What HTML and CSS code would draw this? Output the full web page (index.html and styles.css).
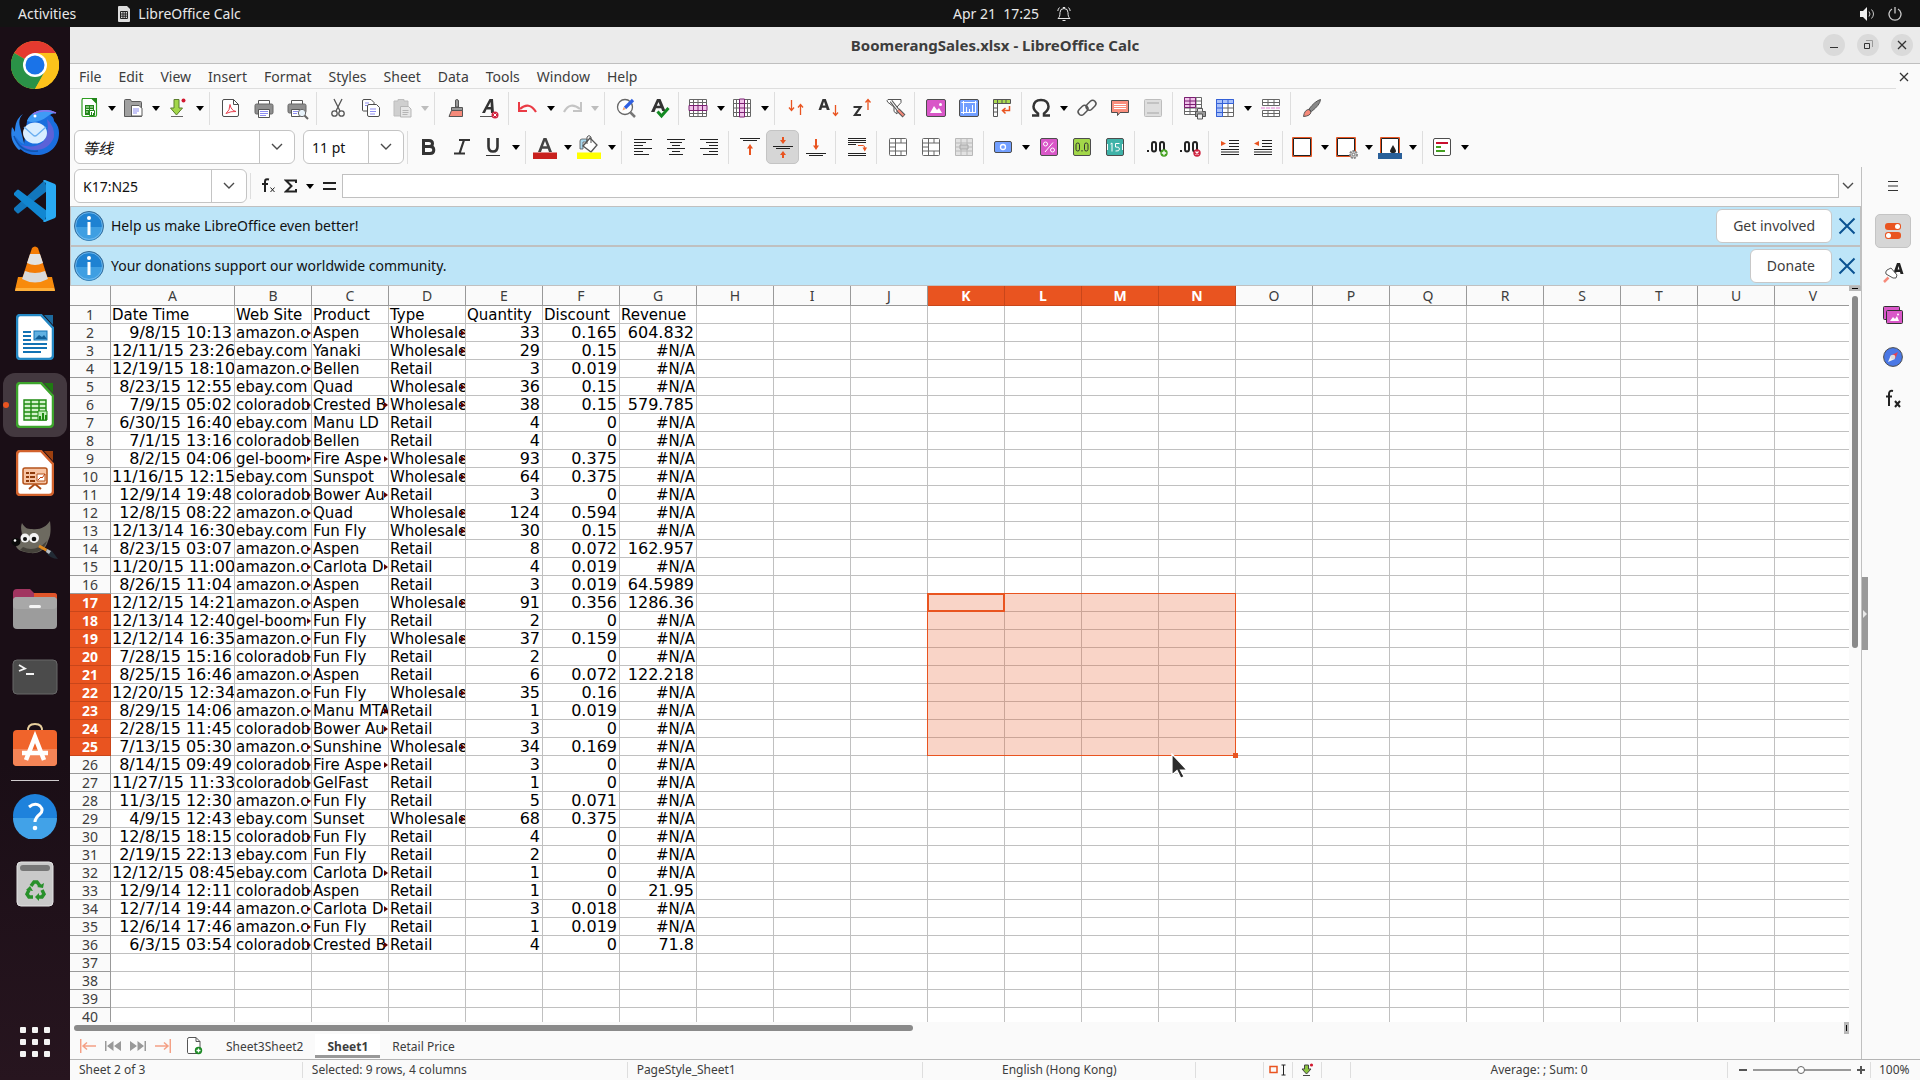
FILE: index.html
```html
<!DOCTYPE html>
<html lang="en">
  <head>
    <meta charset="UTF-8" />
    <meta name="viewport" content="width=device-width, initial-scale=1.0" />
    <title>BoomerangSales.xlsx - LibreOffice Calc</title>
    <link rel="stylesheet" href="styles.css">
  </head>
  <body>
    <svg class="defs" aria-hidden="true">
      <symbol id="caret" viewBox="0 0 8 5"><path d="M0 0h8L4 5z" fill="currentColor"/></symbol>
      <symbol id="chevron" viewBox="0 0 12 8"><path d="M1 1l5 5 5-5" fill="none" stroke="#4a4a4a" stroke-width="1.4"/></symbol>
      <symbol id="cross" viewBox="0 0 18 18"><path d="M1.5 1.5l15 15M16.5 1.5l-15 15" stroke="#0a5292" stroke-width="2"/></symbol>
      <symbol id="info" viewBox="0 0 30 30">
        <circle cx="15" cy="15" r="14.5" fill="#1e82d2" stroke="#3b6b92"/>
        <path d="M1.5 16h27a13.5 13.5 0 0 1-27 0z" fill="#3f9fe2"/>
        <circle cx="15" cy="15" r="13.4" fill="none" stroke="#7fc0ee" stroke-width=".8"/>
        <circle cx="15" cy="7" r="2" fill="#fff"/><path d="M15 11v13" stroke="#fff" stroke-width="3"/>
      </symbol>
      <symbol id="merge" viewBox="0 0 24 24">
        <rect x="3.5" y="3.5" width="17" height="17" rx="1" fill="#fff" stroke="#666"/>
        <path d="M9.5 3.500v17M3.500 8h17M3.500 12h6M3.500 16h17M15 3.500V8M15 16v4.500" stroke="#666" fill="none"/>
      </symbol>
    </svg>

    <header class="topbar">
      <div class="topbar-left">
        <a href="#">Activities</a>
        <a href="#" class="app-name">
          <svg width="12" height="16" viewBox="0 0 12 16"><path d="M1 0h8l3 3v12q0 1-1 1H1q-1 0-1-1V1q0-1 1-1z" fill="#ddd"/><path d="M2.500 5.500h7v7h-7zM2.500 8h7M2.500 10.200h7M5 5.500v7M7.300 5.500v7" fill="none" stroke="#222"/></svg>
          LibreOffice Calc
        </a>
      </div>
      <div class="topbar-clock">
        <time>Apr 21&nbsp; 17:25</time>
        <svg width="14" height="16" viewBox="0 0 14 16" fill="none" stroke="#e8e8e8"><path d="M1 12.500h12c-1.500-1.500-2-2.500-2-6a4 4 0 0 0-8 0c0 3.500-.5 4.500-2 6zM5.500 14.500h3M.8 5Q1 3 2.500 1.500M13.200 5Q13 3 11.500 1.500M5.800 1.500h2.400"/></svg>
      </div>
      <div class="topbar-right">
        <svg width="15" height="14" viewBox="0 0 15 14"><path d="M0 4h3l4-4v14l-4-4H0z" fill="#eee"/><path d="M9 4.500q2 2.500 0 5M11.500 2.500q4 4.500 0 9" fill="none" stroke="#ccc"/></svg>
        <svg width="14" height="14" viewBox="0 0 14 14" fill="none" stroke="#ccc" stroke-width="1.300"><path d="M4 2a6 6 0 1 0 6 0M7 0v6.500"/></svg>
      </div>
    </header>

    <div class="desktop">
      <nav class="dock" aria-label="Dock">
        <a href="#" aria-label="Chrome"><svg width="48" height="48" viewBox="0 0 48 48"><circle cx="24" cy="24" r="24" fill="#fcc21b"/><path d="M24 24L3.200 12A24 24 0 0 1 44.800 12z" fill="#e53a2f"/><path d="M3.200 12A24 24 0 0 0 24 48L34 30 24 24z" fill="#2a9247"/><path d="M24 12h20.800A24 24 0 0 1 24 48l11-19z" fill="#fcc21b"/><circle cx="24" cy="24" r="12" fill="#fff"/><circle cx="24" cy="24" r="9.500" fill="#1a73e8"/></svg></a>
        <a href="#" aria-label="Thunderbird"><svg width="48" height="48" viewBox="0 0 48 48"><path d="M12 5C7 10 8 15 10 22l4 16-6 3C1 35-1 27 1 18q2 2 3 5C4 15 6 9 12 5z" fill="#2a83ea"/><path d="M16 12C19 4 27 1 35 1q6 0 10 3-4 0-6 2 4 2 4 6 5 5 5 12C48 38 38 46 26 46 12 46 5 38 5 28q4 6 8 7z" fill="#1a6ede"/><path d="M16 12C19 4 27 1 35 1q6 0 10 3-5 0-8 3-7 6-17 6z" fill="#3f9bf5"/><path d="M22 5Q32-1 45 4" fill="none" stroke="#8c74ea" stroke-width="1.500"/><path d="M36 10q8 8 7 18-5 13-19 13-8 0-14-5 14 4 22-3 7-8 4-23z" fill="#5b62d8"/><ellipse cx="24" cy="24" rx="12" ry="10.500" fill="#d9edff"/><path d="M13 18l9 8q2 2 4 0l9-8" fill="none" stroke="#6aaef0" stroke-width="1.300"/><path d="M3 27q6 17 24 15" fill="none" stroke="#1253ad" stroke-width="1.500"/><circle cx="24" cy="7" r="1.500" fill="#fff"/></svg></a>
        <a href="#" aria-label="Visual Studio Code"><svg width="42" height="42" viewBox="0 0 42 42"><path d="M31 0l2 11L5 33q-1 1-2 0l-3-3q-1-1 0-2z" fill="#1277bd"/><path d="M0 13l3-3q1-1 2 0l28 21-2 11L0 15q-1-1 0-2z" fill="#1187d2"/><path d="M31 0l10 4q1 1 1 2v30q0 1-1 2l-10 4q-2 0-2-1l3-2V3l-3-2q0-1 2-1z" fill="#29aaf4"/></svg></a>
        <a href="#" aria-label="VLC"><svg width="42" height="46" viewBox="0 0 42 46"><path d="M4 31h34l3 13q0 1-1 1H2q-1 0-1-1z" fill="#f88b0c"/><path d="M2 42h38l1 3H1z" fill="#ffb13c"/><path d="M18 2q3-3 6 0l10 31q-13 7-26 0z" fill="#f47c06"/><path d="M16 8h10l3 9q-8 4-16 0z" fill="#e2e2e2"/><path d="M11 25q10 4 20 0l3 8q-13 7-26 0z" fill="#dadada"/></svg></a>
        <a href="#" aria-label="LibreOffice Writer"><svg width="38" height="46" viewBox="0 0 38 46"><path d="M4 1h21l12 13v27q0 4-4 4H4q-3 0-3-4V5q0-4 3-4z" fill="#fff" stroke="#2488c4" stroke-width="2.500"/><path d="M28 1h9v10z" fill="#1d6a9e"/><path d="M7 18h8M7 22h8M7 26h8M7 30h24M7 34h24M7 38h18" stroke="#1272b4" stroke-width="2"/><rect x="18" y="17" width="13" height="9" fill="#5fb0e2" stroke="#1272b4"/><path d="M19 25l4-4 3 2 2-2 3 4z" fill="#125e96"/></svg></a>
        <a href="#" class="active" aria-label="LibreOffice Calc"><svg width="38" height="46" viewBox="0 0 38 46"><path d="M4 1h21l12 13v27q0 4-4 4H4q-3 0-3-4V5q0-4 3-4z" fill="#fff" stroke="#3da52c" stroke-width="2.500"/><path d="M28 1h9v10z" fill="#1f7a12"/><path d="M8 18h22v20H8zM8 22h22M8 26h22M8 30h22M8 34h22M15 18v20M23 18v20" fill="#d2f2ca" stroke="#1f8a12" stroke-width="1.400"/><path d="M22 29h9v9h-9z" fill="#c2eebb" stroke="#1f8a12"/><path d="M24 38v-4M27 38v-7M30 38v-5" stroke="#1f8a12" stroke-width="2"/></svg></a>
        <a href="#" aria-label="LibreOffice Impress"><svg width="38" height="46" viewBox="0 0 38 46"><path d="M4 1h21l12 13v27q0 4-4 4H4q-3 0-3-4V5q0-4 3-4z" fill="#fff" stroke="#d2622c" stroke-width="2.500"/><path d="M28 1h9v10z" fill="#9d400f"/><path d="M13 39l6-5 6 5" fill="none" stroke="#a94814" stroke-width="2"/><rect x="7" y="18" width="24" height="16" rx="2" fill="#f7c5a5" stroke="#b5531b" stroke-width="1.500"/><path d="M10 23h3M10 27h3M10 31h3M14 23h5M14 27h5M14 31h5" stroke="#8f3a0a" stroke-width="2"/><path d="M21 24h8v7h-8z" fill="#fff" stroke="#b5531b"/><path d="M22 30l3-3 1 1 3-4" fill="none" stroke="#c03c0a"/></svg></a>
        <a href="#" aria-label="GIMP"><svg width="48" height="40" viewBox="0 0 48 40"><path d="M11 2c3 5 5 6 10 6 8 1 14-2 18-8 1 8 1 14-2 20-2 9-10 13-18 12-7-1-15-3-14-9 2-3 6-2 6-8 0-5-2-8 0-13z" fill="#6d6a60"/><path d="M12 26q12 6 24-6-4 12-16 12-7-1-11-3z" fill="#45423b"/><ellipse cx="5" cy="21" rx="4.500" ry="4" fill="#0b0b0b"/><circle cx="4" cy="19.500" r="1.300" fill="#fff"/><circle cx="14" cy="17" r="4.500" fill="#f3f3f3"/><circle cx="23" cy="17" r="5" fill="#f3f3f3"/><circle cx="14" cy="18" r="2" fill="#111"/><circle cx="23" cy="18" r="2.300" fill="#111"/><path d="M28 25l9 5" stroke="#e08a1e" stroke-width="3"/><path d="M36 28l5 2 6 8q-8 0-12-7z" fill="#222b35"/><path d="M36 28l4 2-2 3-3-2z" fill="#b9bec4"/></svg></a>
        <a href="#" aria-label="Files"><svg width="46" height="42" viewBox="0 0 46 42"><path d="M1 8V5q0-4 4-4h13l4 4h20q3 0 3 3v8H1z" fill="#a13560"/><path d="M22 5h20q3 0 3 3v8H22z" fill="#e0552a"/><rect x="1" y="9" width="44" height="32" rx="4" fill="#9c9c9c"/><rect x="1" y="9" width="44" height="12" rx="4" fill="#a8a8a8"/><rect x="17" y="17" width="12" height="3" rx="1.500" fill="#f4f4f4"/></svg></a>
        <a href="#" aria-label="Terminal"><svg width="46" height="36" viewBox="0 0 46 36"><rect x="1" y="1" width="44" height="34" rx="4" fill="#4b4b4b" stroke="#686868"/><path d="M7 6l6 3.500L7 12M14 15h8" fill="none" stroke="#f4f4f4" stroke-width="1.800"/></svg></a>
        <a href="#" aria-label="Software"><svg width="46" height="44" viewBox="0 0 46 44"><path d="M16 9q-1-8 7-8t7 8" fill="none" stroke="#e8cf9d" stroke-width="2"/><rect x="1" y="7" width="44" height="36" rx="4" fill="#f0642b"/><path d="M1 26h44v13q0 4-4 4H5q-4 0-4-4z" fill="#f48456"/><path d="M14 37L23 14l9 23M10 30h26" fill="none" stroke="#fff" stroke-width="4.500"/></svg></a>
        <hr />
        <a href="#" aria-label="Help"><svg width="46" height="46" viewBox="0 0 46 46"><circle cx="23" cy="23" r="22" fill="#1e82dc"/><path d="M1 25a22 22 0 0 0 44 0z" fill="#41a2e8"/><path d="M17 14q6-5 11-1 4 4 0 8-5 4-5 8" fill="none" stroke="#fff" stroke-width="3"/><circle cx="23" cy="35" r="2.300" fill="#fff"/></svg></a>
        <a href="#" aria-label="Trash"><svg width="38" height="46" viewBox="0 0 38 46"><rect x="1" y="1" width="36" height="44" rx="4" fill="#c9c9c9" stroke="#e4e4e4"/><rect x="4" y="4" width="30" height="6" rx="3" fill="#777"/><path d="M15 25l3-4h3l3 4M13 29l-2 4 2 3h4M26 29l2 4-2 3h-4" fill="none" stroke="#27902a" stroke-width="3.500"/><path d="M23 32v8l-4-4zM21 26l6 1 1-5zM10 29l7 1-3-5z" fill="#27902a"/></svg></a>
        <a href="#" class="apps" aria-label="Show Applications"><svg width="30" height="30" viewBox="0 0 30 30"><g fill="#f4f4f4"><rect width="6" height="6" rx="1"/><rect x="12" width="6" height="6" rx="1"/><rect x="24" width="6" height="6" rx="1"/><rect y="12" width="6" height="6" rx="1"/><rect x="12" y="12" width="6" height="6" rx="1"/><rect x="24" y="12" width="6" height="6" rx="1"/><rect y="24" width="6" height="6" rx="1"/><rect x="12" y="24" width="6" height="6" rx="1"/><rect x="24" y="24" width="6" height="6" rx="1"/></g></svg></a>
      </nav>

      <div class="window">
        <div class="titlebar">
          <h1>BoomerangSales.xlsx - LibreOffice Calc</h1>
          <div class="window-buttons">
            <button aria-label="Minimize"><svg width="10" height="10"><path d="M1 7.500h8" stroke="#333"/></svg></button>
            <button aria-label="Restore"><svg width="10" height="10" fill="none"><path d="M1.500 3.500h5v5h-5z" stroke="#333"/><path d="M3 .5h6.500V7" stroke="#999"/></svg></button>
            <button aria-label="Close"><svg width="10" height="10"><path d="M1 1l8 8M9 1L1 9" stroke="#333" stroke-width="1.300"/></svg></button>
          </div>
        </div>

        <nav class="menubar">
          <div class="menus">
            <a href="#">File</a><a href="#">Edit</a><a href="#">View</a><a href="#">Insert</a><a href="#">Format</a><a href="#">Styles</a><a href="#">Sheet</a><a href="#">Data</a><a href="#">Tools</a><a href="#">Window</a><a href="#">Help</a>
          </div>
          <button class="doc-close" aria-label="Close document"><svg width="10" height="10"><path d="M1 1l8 8M9 1L1 9" stroke="#333" stroke-width="1.300"/></svg></button>
        </nav>

        <!-- Standard toolbar -->
        <div class="toolbar">
          <button class="split" aria-label="New"><svg viewBox="0 0 24 24"><path d="M5.500 2.500H15l4.500 4.500v12q0 1.500-1.500 1.500H6.500q-1.500 0-1.500-1.500V4z" fill="#fff" stroke="#2f9e22" stroke-width="1.200"/><path d="M14 2h6v6z" fill="#22851a"/><path d="M8 9h9v10H8z" fill="#22851a"/><path d="M9 11h3M13 11h3M9 13.500h3M9 16h2M13 13.500h3" stroke="#d6f5d0"/><path d="M12.500 14.500h5v5h-5z" fill="#fff" stroke="#22851a"/><path d="M14.500 19v-3M16.500 19v-2" stroke="#22851a"/></svg><svg class="caret"><use href="#caret"/></svg></button>
          <button class="split" aria-label="Open"><svg viewBox="0 0 24 24"><path d="M3.500 20.500v-16q0-1 1-1h5l1 2h9q1 0 1 1v14z" fill="#a0a0a0" stroke="#5a5a5a"/><path d="M10.500 9.500H18l3 3v7.500h-10.500z" fill="#fff" stroke="#5a5a5a"/><path d="M12 13h6M12 15h6M12 17h4" stroke="#8d8df0"/></svg><svg class="caret"><use href="#caret"/></svg></button>
          <button class="split" aria-label="Save"><svg viewBox="0 0 24 24"><path d="M9 3.500h5V12h3.500l-6 7-6-7H9z" fill="#a2d749" stroke="#5b7c2c"/><path d="M6 20.500h12" stroke="#666"/><circle cx="18.500" cy="4.500" r="2" fill="#d2172f"/></svg><svg class="caret"><use href="#caret"/></svg></button>
          <span class="sep"></span>
          <button aria-label="Export as PDF"><svg viewBox="0 0 24 24"><path d="M5 3.500h9.500l5 5V19q0 1.500-1.500 1.500H5q-1.500 0-1.500-1.500V5q0-1.500 1.500-1.500z" fill="#fff" stroke="#4d4d4d"/><path d="M14.500 3.500v5h5" fill="none" stroke="#4d4d4d"/><path d="M7 17.500q4-3 4-9 1 6 6 7-5-.5-10 2z" fill="none" stroke="#e8414f"/></svg></button>
          <button aria-label="Print"><svg viewBox="0 0 24 24"><path d="M6.500 8V4.500h11V8" fill="#fff" stroke="#555"/><rect x="3" y="8" width="18" height="10" rx="1.500" fill="#8f8f8f" stroke="#666"/><path d="M6.500 13.500h11v8h-11z" fill="#fff" stroke="#555"/><path d="M8 15.500h8M8 17.500h8M8 19.500h6" stroke="#8d8df0"/></svg></button>
          <button aria-label="Print preview"><svg viewBox="0 0 24 24"><path d="M6.500 8V4.500h11V8" fill="#fff" stroke="#555"/><rect x="3" y="8" width="18" height="9" rx="1.500" fill="#8f8f8f" stroke="#666"/><path d="M6.500 13.500h11v7h-11z" fill="#fff" stroke="#555"/><path d="M8 15.500h5M8 17.500h4" stroke="#8d8df0"/><circle cx="17" cy="17" r="3.700" fill="#e8f3fb" stroke="#666"/><path d="M19.500 19.500L23 23" stroke="#666" stroke-width="2"/></svg></button>
          <span class="sep"></span>
          <button aria-label="Cut"><svg viewBox="0 0 24 24" fill="none" stroke="#555" stroke-width="1.300"><path d="M8 3l6 12M16 3l-6 12"/><circle cx="8.500" cy="17.500" r="2.700"/><circle cx="15.500" cy="17.500" r="2.700"/></svg></button>
          <button aria-label="Copy"><svg viewBox="0 0 24 24"><path d="M5 3.500h7l3 3V15H4.500q-1 0-1-1V5q0-1.500 1.500-1.500z" fill="#fff" stroke="#4d4d4d"/><path d="M10 8.500h7.500l3 3V19q0 1.500-1.500 1.500h-9q-1.500 0-1.500-1.500v-9q0-1.500 1.500-1.500z" fill="#fff" stroke="#4d4d4d"/><path d="M6 7h4M6 9.500h2M11 13h6M11 15.500h6M11 18h5" stroke="#8d8df0"/></svg></button>
          <button class="split off" aria-label="Paste" disabled><svg viewBox="0 0 24 24"><path d="M4 5h4V3.500h6V5h4v15H4z" fill="#cfcfcf" stroke="#bdbdbd"/><path d="M10.500 10.500h8l2.500 2.500v8H10.500z" fill="#e6e6e6" stroke="#b5b5b5"/><path d="M12.500 14.500h6M12.500 16.500h6M12.500 18.500h5" stroke="#b5b5b5"/></svg><svg class="caret"><use href="#caret"/></svg></button>
          <span class="sep"></span>
          <button aria-label="Clone formatting"><svg viewBox="0 0 24 24"><path d="M12.500 3.500q2 0 2 1.500v6h-3V5q0-1.500 1-1.500z" fill="#999" stroke="#555"/><path d="M7.500 11.500h11v3h-11z" fill="#999" stroke="#555"/><path d="M7.500 14.500h11v6H5z" fill="#f68a7a" stroke="#555"/></svg></button>
          <button aria-label="Clear formatting"><svg viewBox="0 0 24 24"><path d="M5 17L12.500 3H16l1 14h-3l-.2-3.500H9.500L8 17zM11 11h2.800l-.2-5z" fill="#333"/><path d="M3 20.500h12" stroke="#555"/><circle cx="18" cy="19" r="3.500" fill="#d2243f"/><path d="M16.500 17.500l3 3M19.500 17.500l-3 3" stroke="#fff"/></svg></button>
          <span class="sep"></span>
          <button class="split" aria-label="Undo"><svg viewBox="0 0 24 24"><path d="M4 13q9-8 16 3" fill="none" stroke="#ea3b45" stroke-width="2.200"/><path d="M3 6v9h8" fill="none" stroke="#ea3b45" stroke-width="2"/></svg><svg class="caret"><use href="#caret"/></svg></button>
          <button class="split off" aria-label="Redo" disabled><svg viewBox="0 0 24 24"><path d="M4 16q6-11 16-3" fill="none" stroke="#c4c4c4" stroke-width="2.200"/><path d="M21 6v9h-8" fill="none" stroke="#c4c4c4" stroke-width="2"/></svg><svg class="caret"><use href="#caret"/></svg></button>
          <span class="sep"></span>
          <button aria-label="Find and replace"><svg viewBox="0 0 24 24"><circle cx="11" cy="11" r="7.500" fill="#fff" stroke="#666" stroke-width="1.300"/><path d="M16.500 16.500L21 21" stroke="#777" stroke-width="2.500"/><path d="M11 12l8-8" stroke="#2f5fe0" stroke-width="3.200"/><path d="M8.500 14.500l1-3.500 2.500 2z" fill="#f0a878"/></svg></button>
          <button aria-label="Spelling"><svg viewBox="0 0 24 24"><path d="M4 16L10 3h3.500l5 12h-3.300l-1-2.800H9L7.500 16zM9.800 9.800H13L11.500 6z" fill="#333"/><path d="M10.500 15.500l4 4.500 7-8" fill="none" stroke="#138a22" stroke-width="3"/></svg></button>
          <span class="sep"></span>
          <button class="split" aria-label="Row"><svg viewBox="0 0 24 24"><path d="M3.500 3.500h17v17h-17z" fill="#fff" stroke="#666"/><path d="M3.500 6.500h17M3.500 17.500h17M7.500 3.500v17M12 3.500v17M16.500 3.500v17" stroke="#666"/><path d="M3 9.500h18v5H3z" fill="#f0c3ea" stroke="#7b1f72"/><path d="M7.500 9v6M12 9v6M16.500 9v6" stroke="#7b1f72"/></svg><svg class="caret"><use href="#caret"/></svg></button>
          <button class="split" aria-label="Column"><svg viewBox="0 0 24 24"><path d="M3.500 3.500h17v17h-17z" fill="#fff" stroke="#666"/><path d="M3.500 7.500h17M3.500 12h17M3.500 16.500h17M6.500 3.500v17M17.500 3.500v17" stroke="#666"/><path d="M9.500 3v18h5V3z" fill="#f0c3ea" stroke="#7b1f72"/><path d="M9 7.500h6M9 12h6M9 16.500h6" stroke="#7b1f72"/></svg><svg class="caret"><use href="#caret"/></svg></button>
          <span class="sep"></span>
          <button aria-label="Sort"><svg viewBox="0 0 24 24" fill="none" stroke="#e95420" stroke-width="1.300"><path d="M7.500 4v10M5 11.500l2.500 3 2.500-3M16.500 9v10M14 11.500l2.500-3 2.500 3"/></svg></button>
          <button aria-label="Sort ascending"><svg viewBox="0 0 24 24"><path d="M1.500 14L5.500 3h3.300l4 11h-3l-.7-2.300H5L4.300 14zM5.700 9.500h2.700L7 5.500z" fill="#333"/><path d="M18.500 9v10M16 16.500l2.500 3 2.500-3" fill="none" stroke="#e95420" stroke-width="1.300"/></svg></button>
          <button aria-label="Sort descending"><svg viewBox="0 0 24 24"><path d="M3.500 11h7l-5.500 8h6" fill="none" stroke="#333" stroke-width="2.200"/><path d="M18 4v10M15.500 6.500l2.500-3 2.500 3" fill="none" stroke="#e95420" stroke-width="1.300"/></svg></button>
          <button aria-label="AutoFilter"><svg viewBox="0 0 24 24"><path d="M5 3.500h13v3L14 11v7l-3-2.500V11L4.500 6q-1-2 .5-2.500z" fill="#fff" stroke="#555"/><path d="M8 5l7 9" stroke="#555" stroke-width="3"/><path d="M8 5l7 9" stroke="#fff" stroke-width="1.200"/><path d="M15 14l6 6" stroke="#555" stroke-width="4"/><path d="M15 14l5.500 5.500" stroke="#f68a7a" stroke-width="2"/></svg></button>
          <span class="sep"></span>
          <button aria-label="Insert image"><svg viewBox="0 0 24 24"><rect x="2.500" y="3.500" width="19" height="17" rx="1.500" fill="#d957c8" stroke="#4d4d4d"/><path d="M6 17l4-7 3 4 2-2 3 5z" fill="#fff"/><circle cx="16.500" cy="8.500" r="1.500" fill="#fff"/></svg></button>
          <button aria-label="Insert chart"><svg viewBox="0 0 24 24"><rect x="2.500" y="3.500" width="19" height="17" rx="1.500" fill="#729fff" stroke="#4d4d4d"/><path d="M4.500 6.500h15M6.500 5v13M4 16.500h15M18.500 5v11M9.500 16v-5M12.500 16v-3M15.500 16V9" stroke="#fff" fill="none"/></svg></button>
          <button aria-label="Pivot table"><svg viewBox="0 0 24 24"><path d="M3.500 3.500h17v4h-17z" fill="#a9d94f" stroke="#555"/><path d="M3.500 7.500h4v13h-4zM3.500 12h4M3.500 16h4M7.500 3.500v4M12 3.500v4M16 3.500v4" fill="none" stroke="#555"/><path d="M19.500 10v4.500H13M15.500 12l-3 2.500 3 3" fill="none" stroke="#e95420" stroke-width="1.500"/></svg></button>
          <span class="sep"></span>
          <button class="split" aria-label="Special character"><svg viewBox="0 0 24 24"><path d="M3 19.500h6v-2Q4.500 14 4.500 10.500 5 4 12 4t7.500 6.500q0 3.500-4.500 7v2h6" fill="none" stroke="#333" stroke-width="2.500"/></svg><svg class="caret"><use href="#caret"/></svg></button>
          <button aria-label="Hyperlink"><svg viewBox="0 0 24 24" fill="none" stroke="#555" stroke-width="1.500"><rect x="2.500" y="11" width="11" height="6.500" rx="3.200" transform="rotate(-45 8 14.200)"/><rect x="10.500" y="6" width="11" height="6.500" rx="3.200" transform="rotate(-45 16 9.200)"/></svg></button>
          <button aria-label="Comment"><svg viewBox="0 0 24 24"><path d="M3.500 4.500h17v12H12l-2.500 3v-3h-6z" fill="#fa8e7d" stroke="#4d4d4d"/><path d="M6 8.500h12M6 10.500h12M6 12.500h12" stroke="#fff"/></svg></button>
          <button aria-label="Headers and footers" disabled><svg viewBox="0 0 24 24"><rect x="3.500" y="3.500" width="17" height="17" rx="1" fill="#dedede" stroke="#bdbdbd"/><path d="M6 7h12M6 17h12" stroke="#c2c2c2" stroke-width="2"/></svg></button>
          <span class="sep"></span>
          <button aria-label="Print area"><svg viewBox="0 0 24 24"><path d="M2.500 1.500h17v17h-17zM2.500 5h17M2.500 8.500h17M2.500 12h17M2.500 15.500h17M8 1.500v17M14 1.500v17" fill="#fff" stroke="#666"/><path d="M2.500 1.500h11v10h-11zM2.500 5h11M2.500 8.500h11M8 1.500v10" fill="#f0c3ea" stroke="#7b1f72"/><path d="M13.500 15.500h10v5h-10z" fill="#999" stroke="#555"/><path d="M15.500 15.500v-3h5v3M15.500 18h5v5h-5z" fill="#eee" stroke="#555"/></svg></button>
          <button class="split" aria-label="Freeze rows and columns"><svg viewBox="0 0 24 24"><path d="M3.500 3.500h17v17h-17z" fill="#fff" stroke="#666"/><path d="M3.500 3.500h17v4H9.500v13h-6z" fill="#a9c1fa"/><path d="M9.500 12h11M9.500 16.500h11M15 7.500v13" stroke="#666"/><path d="M3.500 3.500h17v4h-17zM3.500 3.500v17h6v-17M3.500 12h6M3.500 16.500h6M15 3.500v4" fill="none" stroke="#3461d8"/></svg><svg class="caret"><use href="#caret"/></svg></button>
          <button aria-label="Split window"><svg viewBox="0 0 24 24"><path d="M3.500 3.500h17v6h-17zM3.500 6.500h17M9 3.500v6M15 3.500v6M3.500 14.500h17v6h-17zM3.500 17.500h17M9 14.500v6M15 14.500v6" fill="#fff" stroke="#666"/><path d="M2 12h20" stroke="#e37fd4" stroke-dasharray="4 1"/></svg></button>
          <span class="sep"></span>
          <button aria-label="Show draw functions"><svg viewBox="0 0 24 24"><path d="M9 13Q15 5 20.500 3.500 20 9 11.500 15.500z" fill="#888" stroke="#555"/><path d="M3.500 20.500q1-7 5.500-7l2 2.500q-.5 4-7.500 4.500z" fill="#f68a7a" stroke="#555"/></svg></button>
        </div>

        <!-- Formatting toolbar -->
        <div class="toolbar">
          <div class="combo font-name">
            <select aria-label="Font name"><option>等线</option></select>
            <span class="drop"><svg class="chev"><use href="#chevron"/></svg></span>
          </div>
          <div class="combo font-size">
            <select aria-label="Font size"><option>11 pt</option></select>
            <span class="drop"><svg class="chev"><use href="#chevron"/></svg></span>
          </div>
          <span class="sep"></span>
          <button aria-label="Bold"><svg viewBox="0 0 24 24"><path d="M6.500 5.500H12q3.500 0 3.500 3T12 11.500H7 13q3.800 0 3.800 3.500T13 18.500H6.500z" fill="none" stroke="#333" stroke-width="3"/></svg></button>
          <button aria-label="Italic"><svg viewBox="0 0 24 24"><path d="M9 5h11M4 18.500h11M14 5L9.500 18.500" fill="none" stroke="#333" stroke-width="2.200"/></svg></button>
          <button class="split" aria-label="Underline"><svg viewBox="0 0 24 24"><path d="M7.500 3v8.500q0 5 4.500 5t4.500-5V3" fill="none" stroke="#333" stroke-width="2.600"/><path d="M5 20.500h14" stroke="#333"/></svg><svg class="caret"><use href="#caret"/></svg></button>
          <span class="sep"></span>
          <button class="split" aria-label="Font color"><svg viewBox="0 0 24 24"><path d="M5 17L10.500 3h3L19 17h-3l-1.200-3.300H9.200L8 17zM10 11.300h4L12 6z" fill="#444"/><path d="M0 17.500h24V24H0z" fill="#c9211e"/></svg><svg class="caret"><use href="#caret"/></svg></button>
          <button class="split" aria-label="Background color"><svg viewBox="0 0 24 24"><path d="M3 14V6q0-2 2-2h5v3H6v7z" fill="#a9d8ee" stroke="#555" stroke-width=".8"/><path d="M13 3l7 7-6 7-8-6z" fill="#fff" stroke="#555" stroke-width="1.300"/><path d="M10 9V2q2-3 4 0v6" fill="none" stroke="#555"/><path d="M0 17.500h24V24H0z" fill="#ff0"/></svg><svg class="caret"><use href="#caret"/></svg></button>
          <span class="sep"></span>
          <button aria-label="Align left"><svg viewBox="0 0 24 24"><path d="M3 4.500h18M3 7.500h12M3 10.500h9M3 13.500h18M3 16.500h9M3 19.500h15" stroke="#222"/></svg></button>
          <button aria-label="Align center"><svg viewBox="0 0 24 24"><path d="M3 4.500h18M6 7.500h12M8 10.500h8M3 13.500h18M8 16.500h8M5 19.500h14" stroke="#222"/></svg></button>
          <button aria-label="Align right"><svg viewBox="0 0 24 24"><path d="M3 4.500h18M9 7.500h12M12 10.500h9M3 13.500h18M12 16.500h9M6 19.500h15" stroke="#222"/></svg></button>
          <span class="sep"></span>
          <button aria-label="Align top"><svg viewBox="0 0 24 24"><path d="M2 3.500h20M5 5.500h14" stroke="#222"/><path d="M12 20v-7" stroke="#e95420" stroke-width="2"/><path d="M9 13.500h6L12 9z" fill="#e95420"/></svg></button>
          <button class="pressed" aria-label="Center vertically"><svg viewBox="0 0 24 24"><path d="M2 11.500h20M5 13.500h14" stroke="#222"/><path d="M12 2v4M12 23v-4" stroke="#e95420" stroke-width="2"/><path d="M9 5h6l-3 4zM9 20h6l-3-4z" fill="#e95420"/></svg></button>
          <button aria-label="Align bottom"><svg viewBox="0 0 24 24"><path d="M2 18.500h20M5 20.500h14" stroke="#222"/><path d="M12 4v7" stroke="#e95420" stroke-width="2"/><path d="M9 10.500h6L12 15z" fill="#e95420"/></svg></button>
          <span class="sep"></span>
          <button aria-label="Wrap text"><svg viewBox="0 0 24 24"><path d="M3 3.500h18M3 5.500h18M3 7.500h18M3 9.500h8M3 18.500h18M3 20.500h18" stroke="#222"/><path d="M13 10.500h5q2 0 2 3" fill="none" stroke="#e95420"/><path d="M17.500 12.500h4.500l-2.200 4z" fill="#e95420"/></svg></button>
          <span class="sep"></span>
          <button aria-label="Merge and center"><svg><use href="#merge"/></svg></button>
          <button aria-label="Merge cells"><svg><use href="#merge"/></svg></button>
          <button aria-label="Unmerge cells" disabled><svg viewBox="0 0 24 24"><path d="M3.500 3.500h17v17h-17zM3.500 8h17M3.500 16h17M9 3.500v17M15 3.500v17M3.500 12h17" fill="#e2e2e2" stroke="#b8b8b8"/><path d="M8 10h8v4H8z" fill="#ccc" stroke="#aaa"/></svg></button>
          <span class="sep"></span>
          <button class="split" aria-label="Format as currency"><svg viewBox="0 0 24 24"><rect x="3.500" y="6.500" width="17" height="11" rx="1.500" fill="#729fff" stroke="#4d4d4d"/><circle cx="12" cy="12" r="2.500" fill="none" stroke="#fff" stroke-width="1.300"/></svg><svg class="caret"><use href="#caret"/></svg></button>
          <button aria-label="Format as percent"><svg viewBox="0 0 24 24"><rect x="3.500" y="3.500" width="17" height="17" rx="1.500" fill="#d957c8" stroke="#4d4d4d"/><path d="M16 7.500l-8 9.500" stroke="#fff"/><circle cx="8.500" cy="9" r="2" fill="none" stroke="#fff"/><circle cx="15.500" cy="15" r="2" fill="none" stroke="#fff"/></svg></button>
          <button aria-label="Format as number"><svg viewBox="0 0 24 24"><rect x="3.500" y="3.500" width="17" height="17" rx="1.500" fill="#a2d749" stroke="#4d4d4d"/><rect x="6" y="8" width="3.500" height="8" rx="1.700" fill="none" stroke="#333"/><rect x="14.500" y="8" width="3.500" height="8" rx="1.700" fill="none" stroke="#333"/><path d="M11.500 15h1v1.500h-1z" fill="#333"/></svg></button>
          <button aria-label="Format as date"><svg viewBox="0 0 24 24"><rect x="3.500" y="3.500" width="17" height="17" rx="1.500" fill="#3fb2a8" stroke="#4d4d4d"/><path d="M4.500 9v6M19.500 9v6M7.500 9l1.500-1v8.500M16.500 8.500h-4V12q4-.5 4 2t-4 2" fill="none" stroke="#fff"/></svg></button>
          <span class="sep"></span>
          <button aria-label="Add decimal place"><svg viewBox="0 0 24 24"><path d="M3 15h2v2H3z" fill="#222"/><rect x="8" y="7" width="4" height="9.500" rx="2" fill="none" stroke="#222" stroke-width="2"/><rect x="16" y="7" width="4" height="9.500" rx="2" fill="none" stroke="#222" stroke-width="2"/><circle cx="20" cy="18" r="3.700" fill="#43a01f"/><path d="M17.800 18h4.400M20 15.800v4.400" stroke="#fff" stroke-width="1.300"/></svg></button>
          <button aria-label="Delete decimal place"><svg viewBox="0 0 24 24"><path d="M3 15h2v2H3z" fill="#222"/><rect x="8" y="7" width="4" height="9.500" rx="2" fill="none" stroke="#222" stroke-width="2"/><rect x="16" y="7" width="4" height="9.500" rx="2" fill="none" stroke="#222" stroke-width="2"/><circle cx="20" cy="18" r="3.700" fill="#cf2440"/><path d="M18.500 16.500l3 3M21.500 16.500l-3 3" stroke="#fff" stroke-width="1.200"/></svg></button>
          <span class="sep"></span>
          <button aria-label="Increase indent"><svg viewBox="0 0 24 24"><path d="M11 5.500h10M11 8.500h10M11 11.500h10M3 14.500h18M3 17h18M3 19.500h18" stroke="#222"/><path d="M3 6l5 2.500-5 2.500z" fill="#e95420"/></svg></button>
          <button aria-label="Decrease indent"><svg viewBox="0 0 24 24"><path d="M11 5.500h10M11 8.500h10M11 11.500h10M3 14.500h18M3 17h18M3 19.500h18" stroke="#222"/><path d="M8 6L3 8.500 8 11z" fill="#e95420"/></svg></button>
          <span class="sep"></span>
          <button class="split" aria-label="Borders"><svg viewBox="0 0 24 24"><path d="M2.500 2.500h19v19h-19z" fill="#fff" stroke="#e95420"/><path d="M3.500 3.500h17v17h-17z" fill="none" stroke="#222"/></svg><svg class="caret"><use href="#caret"/></svg></button>
          <button class="split" aria-label="Border style"><svg viewBox="0 0 24 24"><path d="M2.500 2.500h19v19h-19z" fill="#fff" stroke="#e95420"/><path d="M3.500 3.500h17v17h-17z" fill="none" stroke="#222"/><circle cx="19.500" cy="19.500" r="3.500" fill="#ccc" stroke="#888" stroke-width="2" stroke-dasharray="2 1"/><circle cx="19.500" cy="19.500" r="1.300" fill="#fff" stroke="#777"/></svg><svg class="caret"><use href="#caret"/></svg></button>
          <button class="split" aria-label="Border color"><svg viewBox="0 0 24 24"><path d="M2.500 2.500h19v19h-19z" fill="#fff" stroke="#e95420"/><path d="M3.500 3.500h17v17h-17z" fill="none" stroke="#222"/><path d="M15 10q3 5 3 6 0 2-3 2t-3-2q0-1 3-6z" fill="#222"/><path d="M0 18h24v6H0z" fill="#2a6099"/></svg><svg class="caret"><use href="#caret"/></svg></button>
          <span class="sep"></span>
          <button class="split" aria-label="Conditional formatting"><svg viewBox="0 0 24 24"><rect x="3.500" y="3.500" width="17" height="17" rx="1.500" fill="#fff" stroke="#4d4d4d"/><path d="M6 8h12" stroke="#c8102e" stroke-width="2"/><path d="M6 12h5M6 16h9" stroke="#43a01f" stroke-width="2"/></svg><svg class="caret"><use href="#caret"/></svg></button>
        </div>

        <div class="main">
          <div class="document">
            <div class="formula-bar">
              <div class="combo name-box">
                <input type="text" aria-label="Name box" value="K17:N25" />
                <button class="drop" aria-label="Named ranges"><svg class="chev"><use href="#chevron"/></svg></button>
              </div>
              <span class="sep"></span>
              <button class="fx" aria-label="Function wizard"><svg width="16" height="18" viewBox="0 0 16 18" fill="none" stroke="#222"><path d="M9 2.500q-4-1-4 2V15M2 7h6" stroke-width="2"/><path d="M10.500 10.500l4 4.500M14.500 10.500l-4 4.500"/></svg></button>
              <button class="sum" aria-label="Select function"><svg width="14" height="14" viewBox="0 0 14 14"><path d="M12 4V1.500H2L7.500 7 2 12.500h10V10" fill="none" stroke="#222" stroke-width="2"/></svg><svg class="caret"><use href="#caret"/></svg></button>
              <button class="fx" aria-label="Formula"><svg width="14" height="10" viewBox="0 0 14 10"><path d="M0 2h13M0 8h13" stroke="#222" stroke-width="2"/></svg></button>
              <input class="formula" type="text" aria-label="Input line" />
              <button class="expand" aria-label="Expand formula bar"><svg class="chev"><use href="#chevron"/></svg></button>
            </div>

            <div class="infobar">
              <svg width="30" height="30"><use href="#info"/></svg>
              <span>Help us make LibreOffice even better!</span>
              <button class="action">Get involved</button>
              <button class="dismiss" aria-label="Close infobar"><svg width="18" height="18"><use href="#cross"/></svg></button>
            </div>
            <div class="infobar">
              <svg width="30" height="30"><use href="#info"/></svg>
              <span>Your donations support our worldwide community.</span>
              <button class="action">Donate</button>
              <button class="dismiss" aria-label="Close infobar"><svg width="18" height="18"><use href="#cross"/></svg></button>
            </div>

            <div class="sheet-area">
              <div class="sheet">
                <div class="grid">
                  <table id="cells"></table>
                </div>
                <div class="hscroll"><div class="track"><div class="thumb"></div></div><div class="splitter"></div></div>
              </div>
              <div class="vscroll"><div class="splitter"></div><div class="track"><div class="thumb"></div></div></div>
            </div>

            <div class="tabs">
              <button aria-label="First sheet"><svg width="16" height="14" viewBox="0 0 16 14"><path d="M.7 0v14M3 7h13M7 3.500L3 7l4 3.500" fill="none" stroke="#f4a085" stroke-width="1.500"/></svg></button>
              <button aria-label="Previous sheet"><svg width="16" height="10" viewBox="0 0 16 10"><path d="M0 0h1.500v10H0zM8.500 0v10L2 5zM16 0v10L9 5z" fill="#999"/></svg></button>
              <button aria-label="Next sheet"><svg width="16" height="10" viewBox="0 0 16 10"><path d="M16 0h-1.500v10H16zM7.500 0v10L14 5zM0 0v10l7-5z" fill="#999"/></svg></button>
              <button aria-label="Last sheet"><svg width="16" height="14" viewBox="0 0 16 14"><path d="M15.300 0v14M13 7H0M9 3.500L13 7l-4 3.500" fill="none" stroke="#f4a085" stroke-width="1.500"/></svg></button>
              <button class="add" aria-label="Add sheet"><svg width="16" height="18" viewBox="0 0 16 18"><path d="M2 .5h7l4 4v11q0 1-1 1H2q-1.500 0-1.500-1v-13Q.5.5 2 .5zM9 .5v4h4" fill="#fff" stroke="#555"/><circle cx="11.500" cy="13.500" r="3.700" fill="#1c8a24"/><path d="M9.500 13.500h4M11.500 11.500v4" stroke="#fff" stroke-width="1.300"/></svg></button>
              <a href="#">Sheet3Sheet2</a>
              <a href="#" class="current">Sheet1</a>
              <a href="#">Retail Price</a>
            </div>
          </div>

          <aside class="sidebar">
            <button aria-label="Sidebar settings"><svg width="10" height="10"><path d="M0 .5h10M0 5h10M0 9.500h10" stroke="#333"/></svg></button>
            <button class="pressed" aria-label="Properties"><svg width="18" height="18" viewBox="0 0 18 18"><rect x="1" y="1" width="16" height="7" rx="3" fill="#e95420"/><rect x="1" y="10" width="16" height="7" rx="3" fill="#e95420"/><circle cx="13.500" cy="4.500" r="2.500" fill="#fff"/><circle cx="4.500" cy="13.500" r="2.500" fill="#fff"/></svg></button>
            <button aria-label="Styles"><svg width="22" height="22" viewBox="0 0 22 22"><path d="M11 12L15 1h3l3.500 11h-3l-.5-2h-3zM15.700 7.500h1.700L16.500 4z" fill="#222"/><path d="M5 8l4-2 6 7-1 3h-3L4 12q-1-2 1-4z" fill="#fff" stroke="#555"/><path d="M6.500 15.500L2 20" stroke="#f68a7a" stroke-width="2.500"/></svg></button>
            <button aria-label="Gallery"><svg width="22" height="20" viewBox="0 0 22 20"><rect x="1.500" y="1.500" width="16" height="13" rx="1" fill="#d957c8" stroke="#333"/><rect x="4.500" y="5.500" width="16" height="13" rx="1" fill="#d957c8" stroke="#333"/><path d="M8 16l3-4 2 2 2-3 2 5z" fill="#fff"/><circle cx="16" cy="9.500" r="1" fill="#fff"/></svg></button>
            <button aria-label="Navigator"><svg width="20" height="20" viewBox="0 0 20 20"><circle cx="10" cy="10" r="9.400" fill="#4a78e6" stroke="#4d4d4d"/><path d="M15 5l-3 7-3-4z" fill="#e8414f"/><path d="M5 15l3-7 4 4z" fill="#f2f2f2"/><circle cx="10" cy="10" r="2.300" fill="#dcdcdc"/></svg></button>
            <button aria-label="Functions"><svg width="18" height="20" viewBox="0 0 18 20" fill="none" stroke="#222" stroke-width="2"><path d="M9 2Q5 1 5 5v12M2 7.500h6M11 12l5 6M16 12l-5 6"/></svg></button>
            <div class="grip"><svg width="4" height="8"><path d="M0 0v8l4-4z" fill="#e8e8e8"/></svg></div>
          </aside>
        </div>

        <footer class="statusbar">
          <span>Sheet 2 of 3</span>
          <span>Selected: 9 rows, 4 columns</span>
          <span>PageStyle_Sheet1</span>
          <span class="middle">English (Hong Kong)</span>
          <span></span>
          <span class="icon"><svg width="18" height="12" viewBox="0 0 18 12" fill="none"><path d="M1 2.500h7v6H1z" stroke="#e95420" stroke-width="1.500"/><path d="M12.500 1h4M12.500 11h4M14.500 1v10" stroke="#222"/></svg></span>
          <span class="icon"><svg width="14" height="14" viewBox="0 0 14 14"><path d="M4.500 2h4v4h2.500L6.500 11 2 6h2.500z" fill="#8bc53f" stroke="#444"/><path d="M3 12.500h7" stroke="#444"/><circle cx="11.500" cy="2" r="1.600" fill="#d2172f"/></svg></span>
          <span></span>
          <span class="middle">Average: ; Sum: 0</span>
          <span class="zoom">
            <button aria-label="Zoom out"><svg width="8" height="8"><path d="M0 4h8" stroke="#555" stroke-width="2"/></svg></button>
            <input type="range" min="0" max="100" value="49" aria-label="Zoom" />
            <button aria-label="Zoom in"><svg width="8" height="8"><path d="M0 4h8M4 0v8" stroke="#555" stroke-width="2"/></svg></button>
          </span>
          <span class="percent">100%</span>
        </footer>
      </div>
    </div>

    <script>
      const data = `Date Time|Web Site|Product|Type|Quantity|Discount|Revenue
9/8/15 10:13|amazon.c|Aspen|Wholesale|33|0.165|604.832
12/11/15 23:26|ebay.com|Yanaki|Wholesale|29|0.15|#N/A
12/19/15 18:10|amazon.c|Bellen|Retail|3|0.019|#N/A
8/23/15 12:55|ebay.com|Quad|Wholesale|36|0.15|#N/A
7/9/15 05:02|coloradob|Crested B|Wholesale|38|0.15|579.785
6/30/15 16:40|ebay.com|Manu LD|Retail|4|0|#N/A
7/1/15 13:16|coloradob|Bellen|Retail|4|0|#N/A
8/2/15 04:06|gel-boom|Fire Aspe|Wholesale|93|0.375|#N/A
11/16/15 12:15|ebay.com|Sunspot|Wholesale|64|0.375|#N/A
12/9/14 19:48|coloradob|Bower Au|Retail|3|0|#N/A
12/8/15 08:22|amazon.c|Quad|Wholesale|124|0.594|#N/A
12/13/14 16:30|ebay.com|Fun Fly|Wholesale|30|0.15|#N/A
8/23/15 03:07|amazon.c|Aspen|Retail|8|0.072|162.957
11/20/15 11:00|amazon.c|Carlota D|Retail|4|0.019|#N/A
8/26/15 11:04|amazon.c|Aspen|Retail|3|0.019|64.5989
12/12/15 14:21|amazon.c|Aspen|Wholesale|91|0.356|1286.36
12/13/14 12:40|gel-boom|Fun Fly|Retail|2|0|#N/A
12/12/14 16:35|amazon.c|Fun Fly|Wholesale|37|0.159|#N/A
7/28/15 15:16|coloradob|Fun Fly|Retail|2|0|#N/A
8/25/15 16:46|amazon.c|Aspen|Retail|6|0.072|122.218
12/20/15 12:34|amazon.c|Fun Fly|Wholesale|35|0.16|#N/A
8/29/15 14:06|amazon.c|Manu MTA|Retail|1|0.019|#N/A
2/28/15 11:45|coloradob|Bower Au|Retail|3|0|#N/A
7/13/15 05:30|amazon.c|Sunshine|Wholesale|34|0.169|#N/A
8/14/15 09:49|coloradob|Fire Aspe|Retail|3|0|#N/A
11/27/15 11:33|coloradob|GelFast|Retail|1|0|#N/A
11/3/15 12:30|amazon.c|Fun Fly|Retail|5|0.071|#N/A
4/9/15 12:43|ebay.com|Sunset|Wholesale|68|0.375|#N/A
12/8/15 18:15|coloradob|Fun Fly|Retail|4|0|#N/A
2/19/15 22:13|ebay.com|Fun Fly|Retail|2|0|#N/A
12/12/15 08:45|ebay.com|Carlota D|Retail|1|0|#N/A
12/9/14 12:11|coloradob|Aspen|Retail|1|0|21.95
12/7/14 19:44|amazon.c|Carlota D|Retail|3|0.018|#N/A
12/6/14 17:46|amazon.c|Fun Fly|Retail|1|0.019|#N/A
6/3/15 03:54|coloradob|Crested B|Retail|4|0|71.8`.split("\n").map((line) => line.split("|"));

      const letters = "ABCDEFGHIJKLMNOPQRSTUV".split("");
      const rowCount = 40;
      const selected = { firstCol: 10, lastCol: 13, firstRow: 17, lastRow: 25 };
      // values too long for their column get the overflow marker
      const long = /^(amazon|colorado|gel-|Crested|Fire|Bower|Carlota|Manu MTA|Wholesale)/;

      let html = `<thead><tr><th class="corner"></th>`;
      letters.forEach((l, c) => {
        const on = c >= selected.firstCol && c <= selected.lastCol;
        html += `<th scope="col" class="${c === 0 ? "wide" : ""}${on ? " on" : ""}">${l}</th>`;
      });
      html += "</tr></thead><tbody>";
      for (let r = 1; r <= rowCount; r++) {
        const on = r >= selected.firstRow && r <= selected.lastRow;
        html += `<tr><th scope="row"${on ? ' class="on"' : ""}>${r}</th>`;
        letters.forEach((l, c) => {
          const value = data[r - 1] ? data[r - 1][c] || "" : "";
          const classes = [];
          if (value === "#N/A") classes.push("error");
          else if (r > 1 && value && (c === 0 || c > 3)) classes.push("num");
          if (long.test(value)) classes.push("cut");
          if (r === selected.firstRow && c === selected.firstCol) {
            html += `<td class="cursor-cell"><div class="selection"><div class="active-cell"></div><div class="handle"></div>
              <svg class="pointer" width="18" height="28" viewBox="0 0 18 28"><path d="M1 1v21l5-4.500 3.500 7q1.500 1 3.500-1L9.500 17H16z" fill="#2b2b2b" stroke="#fff" stroke-width="1.200"/></svg></div></td>`;
          } else {
            html += `<td class="${classes.join(" ")}">${value}</td>`;
          }
        });
        html += "</tr>";
      }
      document.getElementById("cells").innerHTML = html + "</tbody>";
    </script>
  </body>
</html>
```
FILE: styles.css
```css
* {
  box-sizing: border-box;
}
body {
  margin: 0;
  height: 100vh;
  display: flex;
  flex-direction: column;
  overflow: hidden;
  font-family: "Noto Sans", "Noto Sans CJK SC", sans-serif;
  font-size: 14px;
  color: #3d3d3d;
  background-color: #fafafa;
}
a {
  color: inherit;
  text-decoration: none;
}
button {
  font: inherit;
  color: inherit;
  border: none;
  background: none;
  padding: 0;
  display: flex;
  align-items: center;
  justify-content: center;
}
svg {
  display: block;
  flex: none;
}
.defs {
  position: absolute;
  width: 0;
  height: 0;
}

/* top panel */
.topbar {
  height: 27px;
  flex: none;
  display: grid;
  grid-template-columns: 1fr auto 1fr;
  align-items: center;
  background-color: #131313;
  color: #e8e8e8;
}
.topbar-left {
  display: flex;
  gap: 42px;
  padding-left: 18px;
}
.app-name {
  display: flex;
  align-items: center;
  gap: 8px;
}
.topbar-clock {
  display: flex;
  align-items: center;
  gap: 18px;
  padding-left: 104px;
}
.topbar-right {
  display: flex;
  justify-content: flex-end;
  gap: 13px;
  padding-right: 18px;
}

.desktop {
  flex: 1;
  min-height: 0;
  display: flex;
}

/* dock */
.dock {
  width: 70px;
  flex: none;
  display: flex;
  flex-direction: column;
  align-items: center;
  padding: 4px 0;
  background: linear-gradient(#1a0e16 70%, #27151f);
}
.dock a {
  width: 64px;
  height: 64px;
  margin: 2px 0;
  flex: none;
  display: flex;
  align-items: center;
  justify-content: center;
  border-radius: 12px;
}
.dock .active {
  position: relative;
  background-color: #43383f;
}
.dock .active::before {
  content: "";
  position: absolute;
  left: 0;
  width: 6px;
  height: 6px;
  border-radius: 3px;
  background-color: #e95420;
}
.dock hr {
  width: 48px;
  margin: 1px 0;
  border: none;
  border-top: 1px solid #cfcbcd;
}
.dock .apps {
  margin-top: auto;
}

/* window frame */
.window {
  flex: 1;
  min-width: 0;
  display: flex;
  flex-direction: column;
}
.titlebar {
  height: 37px;
  flex: none;
  display: grid;
  grid-template-columns: 1fr auto 1fr;
  align-items: center;
  background-color: #ebebeb;
  border-bottom: 1px solid #bfbfbf;
}
.titlebar h1 {
  grid-column: 2;
  margin: 0;
  font-size: 15px;
  font-weight: bold;
}
.window-buttons {
  display: flex;
  justify-content: flex-end;
  gap: 12px;
  padding-right: 7px;
}
.window-buttons button {
  width: 22px;
  height: 22px;
  border-radius: 11px;
  background-color: #dadada;
}
.menubar {
  height: 25px;
  flex: none;
  display: flex;
}
.menus {
  flex: 1;
  display: flex;
  align-items: center;
  gap: 17px;
  padding-left: 9px;
  border-bottom: 1px solid #dedede;
}
.doc-close {
  width: 24px;
  padding-right: 8px;
}

/* toolbars */
.toolbar {
  height: 39px;
  flex: none;
  display: flex;
  align-items: center;
  padding: 2px 0 3px 4px;
}
.toolbar button {
  width: 33px;
  height: 34px;
}
.toolbar button > svg {
  width: 24px;
  height: 24px;
}
.toolbar .split {
  width: 44px;
  padding-left: 3px;
  justify-content: flex-start;
  gap: 7px;
}
.toolbar .split .caret,
.caret {
  width: 8px;
  height: 5px;
  color: #000;
}
.toolbar .off .caret {
  color: #bdbdbd;
}
.sep {
  width: 1px;
  height: 33px;
  margin: 0 4px 0 3px;
  flex: none;
  background-color: #dedede;
}
.pressed {
  border: 1px solid #c4c4c4;
  border-radius: 5px;
  background-color: #d6d6d6;
}
.combo {
  height: 34px;
  display: flex;
  border: 1px solid #c4c4c4;
  border-radius: 6px;
  background-color: #fff;
}
.combo select,
.combo input {
  flex: 1;
  min-width: 0;
  appearance: none;
  border: none;
  background: none;
  padding: 0 0 0 8px;
  font: inherit;
  color: #111;
}
.combo .drop {
  width: 35px;
  display: flex;
  align-items: center;
  justify-content: center;
  border-left: 1px solid #c4c4c4;
}
.chev {
  width: 12px;
  height: 8px;
}
.font-name {
  width: 221px;
  margin-right: 8px;
}
.font-name select {
  font-family: "Noto Sans CJK SC", sans-serif;
  font-size: 15px;
  font-style: italic;
}
.font-size {
  width: 101px;
}

.main {
  flex: 1;
  min-height: 0;
  display: flex;
}
.document {
  flex: 1;
  min-width: 0;
  display: flex;
  flex-direction: column;
}
.formula-bar {
  height: 39px;
  flex: none;
  display: flex;
  align-items: center;
  padding: 2px 0 3px 4px;
}
.name-box {
  width: 173px;
}
.formula-bar .sep {
  height: 26px;
}
.fx {
  width: 25px;
}
.sum {
  width: 37px;
  gap: 8px;
}
.formula {
  flex: 1;
  height: 24px;
  border: 1px solid #c0c0c0;
  background-color: #fff;
}
.expand {
  width: 22px;
  padding-right: 4px;
}

/* notification bars */
.infobar {
  height: 40px;
  flex: none;
  display: flex;
  align-items: center;
  padding: 0 4px 0 3px;
  border: 1px solid #c0c0c0;
  background-color: #bde5f8;
  color: #111;
}
.infobar span {
  flex: 1;
  padding: 0 0 2px 7px;
}
.action {
  height: 34px;
  padding: 0 16px 2px;
  border: 1px solid #c8c8c8;
  border-radius: 6px;
  background-color: #fff;
  color: #3d3d3d;
}
.dismiss {
  width: 18px;
  margin-left: 6px;
}

/* spreadsheet */
.sheet-area {
  flex: 1;
  min-height: 0;
  display: flex;
}
.sheet {
  flex: 1;
  min-width: 0;
  display: flex;
  flex-direction: column;
}
.grid {
  flex: 1;
  min-height: 0;
  overflow: hidden;
  background-color: #fff;
}
table {
  width: 1782px;
  table-layout: fixed;
  border-collapse: separate;
  border-spacing: 0;
}
th {
  width: 77px;
  height: 18px;
  padding: 0;
  border-right: 1px solid #999;
  border-bottom: 1px solid #999;
  background-color: #fafafa;
  font-size: 14px;
  line-height: 17px;
  font-weight: normal;
}
thead th {
  height: 20px;
}
.corner {
  width: 41px;
}
.wide {
  width: 124px;
}
th.on {
  border-color: #c9461a;
  background-color: #e95420;
  color: #fff;
  font-weight: bold;
}
td {
  position: relative;
  height: 18px;
  padding: 1px 1px 0;
  border-right: 1px solid #c0c0c0;
  border-bottom: 1px solid #c0c0c0;
  overflow: hidden;
  white-space: nowrap;
  font-family: "DejaVu Sans", sans-serif;
  font-size: 15px;
  line-height: 16px;
  color: #000;
}
.num {
  padding-right: 2px;
  font-size: 16px;
  text-align: right;
}
.error {
  text-align: right;
}
.cut::after {
  content: "";
  position: absolute;
  right: 0;
  top: 6px;
  border-left: 4px solid #5a0000;
  border-top: 3px solid transparent;
  border-bottom: 3px solid transparent;
}
.cursor-cell {
  overflow: visible;
}
.selection {
  position: absolute;
  z-index: 1;
  left: -1px;
  top: -1px;
  width: 309px;
  height: 163px;
  border: 1px solid #e95420;
  background-color: rgba(233, 84, 32, 0.25);
}
.active-cell {
  position: absolute;
  left: -1px;
  top: -1px;
  width: 78px;
  height: 19px;
  border: 2px solid #e95420;
}
.handle {
  position: absolute;
  right: -3px;
  bottom: -3px;
  width: 5px;
  height: 5px;
  background-color: #e95420;
}
.pointer {
  position: absolute;
  left: 243px;
  top: 159px;
}

/* scrollbars */
.hscroll {
  height: 12px;
  flex: none;
  display: flex;
}
.hscroll .track {
  flex: 1;
  padding: 3px 4px;
}
.hscroll .thumb {
  width: 47.5%;
  height: 6px;
  border-radius: 3px;
  background-color: #8a8a8a;
}
.splitter {
  display: flex;
  align-items: center;
  justify-content: center;
  background-color: #b8b8b8;
}
.hscroll .splitter {
  width: 5px;
  height: 12px;
}
.splitter::after {
  content: "";
  width: 6px;
  height: 1px;
  background-color: #000;
}
.hscroll .splitter::after {
  width: 1px;
  height: 6px;
}
.vscroll {
  width: 12px;
  flex: none;
  display: flex;
  flex-direction: column;
}
.vscroll .splitter {
  height: 5px;
}
.vscroll .track {
  flex: 1;
  padding: 5px 3px;
}
.vscroll .thumb {
  width: 6px;
  height: 48%;
  border-radius: 3px;
  background-color: #8a8a8a;
}

/* sheet tabs */
.tabs {
  height: 24px;
  flex: none;
  display: flex;
  align-items: stretch;
  margin-bottom: 1px;
  padding-left: 5px;
  font-size: 12px;
}
.tabs button {
  width: 25px;
}
.tabs .add {
  width: 39px;
}
.tabs a {
  display: flex;
  align-items: center;
  padding: 0 12px;
}
.tabs .current {
  background-color: #fff;
  box-shadow: inset 0 -3px #999;
  font-weight: bold;
}

/* sidebar */
.sidebar {
  position: relative;
  width: 59px;
  flex: none;
  display: flex;
  flex-direction: column;
  align-items: center;
  gap: 8px;
  padding: 2px 0 0 3px;
  border-left: 1px solid #c0c0c0;
}
.sidebar button {
  width: 36px;
  height: 34px;
}
.sidebar button:first-child {
  margin-bottom: 3px;
}
.grip {
  position: absolute;
  left: 0;
  top: 46%;
  width: 6px;
  height: 73px;
  display: flex;
  align-items: center;
  justify-content: center;
  background-color: #999;
}

/* status bar */
.statusbar {
  height: 21px;
  flex: none;
  display: grid;
  grid-template-columns: 233fr 325fr 296fr 273fr 68px 29px 29px 29px 377fr 143px 49px;
  align-items: center;
  border-top: 1px solid #b4b4b4;
  font-size: 12px;
}
.statusbar span {
  height: 16px;
  padding-left: 9px;
  border-right: 1px solid #dedede;
  line-height: 16px;
  white-space: nowrap;
}
.statusbar .middle {
  padding: 0;
  text-align: center;
}
.statusbar .icon,
.statusbar .zoom {
  display: flex;
  align-items: center;
  justify-content: center;
  padding: 0;
}
.statusbar .zoom {
  gap: 6px;
  padding-left: 6px;
}
.statusbar .percent {
  padding-left: 8px;
  border: none;
}
.zoom input {
  appearance: none;
  width: 98px;
  height: 12px;
  margin: 0;
  background: linear-gradient(#999, #999) center / 100% 2px no-repeat;
}
.zoom input::-webkit-slider-thumb {
  appearance: none;
  width: 8px;
  height: 8px;
  border: 1px solid #666;
  border-radius: 4px;
  background-color: #fff;
}
```
